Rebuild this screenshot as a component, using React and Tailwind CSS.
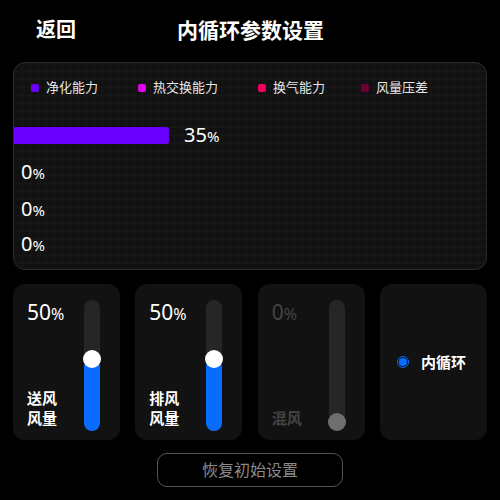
import React from "react";

const font = { fontFamily: '"Noto Sans", "Noto Sans CJK SC", sans-serif' };

function Pct({ v, className = "" }) {
  return (
    <span className={className}>
      <span className="text-[20px]">{v}</span>
      <span className="text-[15px]">%</span>
    </span>
  );
}

function Legend({ color, label }) {
  return (
    <div className="flex items-center gap-[7px]">
      <div className={`w-[8px] h-[8px] rounded-[2px] ${color}`} />
      <span className="text-[13px] text-[#e6e6e6] leading-none">{label}</span>
    </div>
  );
}

function SliderCard({ value, label, fill, disabled }) {
  const center = value === 0 ? 9 : 72;
  return (
    <div className="w-[107px] h-[156px] rounded-[12px] bg-[#121212] flex justify-between pl-[14px] pr-[20px] pt-[16px] pb-[9px]">
      <div className="flex flex-col justify-between pb-[3px]">
        <div className={`leading-[24px] ${disabled ? "text-[#444]" : "text-white"}`}>
          <span className="text-[21px]">{value}</span>
          <span className="text-[16px]">%</span>
        </div>
        <div className={`text-[15px] font-bold leading-[20px] ${disabled ? "text-[#444]" : "text-white"}`}>
          {label.map((l, i) => (
            <div key={i}>{l}</div>
          ))}
        </div>
      </div>
      <div className="relative w-[16px] h-[131px] rounded-full bg-[#262626] overflow-visible">
        {fill && (
          <div
            className="absolute left-0 bottom-0 w-[16px] rounded-full bg-[#0a6cff]"
            style={{ height: center }}
          />
        )}
        <div
          className={`absolute left-[-1px] w-[18px] h-[18px] rounded-full ${disabled ? "bg-[#6f6f6f]" : "bg-white"}`}
          style={{ bottom: center - 9 }}
        />
      </div>
    </div>
  );
}

export default function App() {
  return (
    <div className="w-[500px] h-[500px] bg-black overflow-hidden" style={font}>
      <div className="h-[56px] relative">
        <span className="absolute left-[36px] top-[15px] text-[20px] font-bold text-white">返回</span>
        <span className="absolute left-[177px] top-[15px] text-[21px] font-bold text-white">内循环参数设置</span>
      </div>
      <div className="mx-[13px] mt-[6px] h-[208px] rounded-[12px] border border-[#2a2a2a] bg-[#111111] bg-[linear-gradient(to_right,#171717_1px,transparent_1px),linear-gradient(to_bottom,#171717_1px,transparent_1px)] bg-[size:8px_8px] overflow-hidden">
        <div className="flex items-center h-[48px] pt-[1px] pl-[17px]">
          <div className="w-[107px]"><Legend color="bg-[#6a00ff]" label="净化能力" /></div>
          <div className="w-[120px]"><Legend color="bg-[#e000f0]" label="热交换能力" /></div>
          <div className="w-[103px]"><Legend color="bg-[#f0005a]" label="换气能力" /></div>
          <div><Legend color="bg-[#6a0030]" label="风量压差" /></div>
        </div>
        <div className="flex items-center h-[42px] pt-[6px] -ml-px">
          <div className="w-[156px] h-[17px] bg-[#6a00ff] rounded-[3px]" />
          <Pct v="35" className="ml-[15px] text-white" />
        </div>
        <div className="flex items-center h-[37px] pl-[7px]">
          <Pct v="0" className="text-white" />
        </div>
        <div className="flex items-center h-[37px] pl-[7px]">
          <Pct v="0" className="text-white" />
        </div>
        <div className="flex items-center h-[34px] pl-[7px]">
          <Pct v="0" className="text-white" />
        </div>
      </div>
      <div className="mt-[14px] mx-[13px] flex justify-between">
        <SliderCard value={50} label={["送风", "风量"]} fill />
        <SliderCard value={50} label={["排风", "风量"]} fill />
        <SliderCard value={0} label={["混风"]} disabled />
        <div className="w-[107px] h-[156px] rounded-[12px] bg-[#121212] flex items-center pl-[17px] gap-[12px]">
          <div className="w-[12px] h-[12px] rounded-full border border-[#0a6cff] flex items-center justify-center">
            <div className="w-[8px] h-[8px] rounded-full bg-[#0a6cff]" />
          </div>
          <span className="text-[15px] font-bold text-white">内循环</span>
        </div>
      </div>
      <div className="flex justify-center mt-[13px]">
        <div className="w-[186px] h-[34px] rounded-[10px] border border-[#555] flex items-center justify-center text-[16px] text-[#8a8a8a]">
          恢复初始设置
        </div>
      </div>
    </div>
  );
}
